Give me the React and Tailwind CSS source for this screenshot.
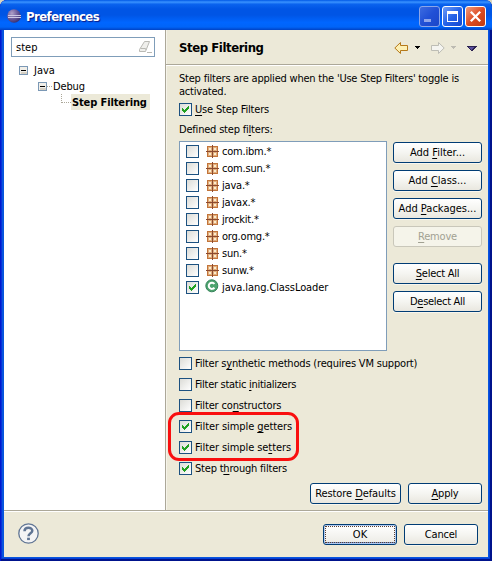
import React from "react";

function Check({ on }) {
  return (
    <span className="block h-[13px] w-[13px] shrink-0 border border-[#1c5180] bg-linear-to-br from-[#dcdcd7] to-white">
      {on && (
        <svg width="11" height="11" viewBox="0 0 11 11" shapeRendering="crispEdges" className="block">
          <path d="M2 4h1v1h1v1h1v-1h1v-1h1v-1h1v-1h1v3h-1v1h-1v1h-1v1h-1v1h-1v-1h-1v-1h-1z" fill="#21a121" />
        </svg>
      )}
    </span>
  );
}

function Label({ text, k, className = "" }) {
  const i = k ?? -1;
  return (
    <span className={"whitespace-pre " + className}>
      {i < 0 ? text : (
        <>
          {text.slice(0, i)}
          <span className="underline decoration-1 underline-offset-[1.5px] [text-decoration-skip-ink:none]">{text[i]}</span>
          {text.slice(i + 1)}
        </>
      )}
    </span>
  );
}

function Button({ text, k, className, disabled, focus }) {
  return (
    <button
      className={
        "flex h-[21px] shrink-0 items-center justify-center rounded-[3px] border p-0 " +
        (disabled
          ? "border-[#c9c7ba] bg-[#f5f4ea] text-[#a1a192] "
          : focus
          ? "border-[#003c74] bg-linear-to-b from-white to-[#ecebe5] shadow-[inset_0_0_0_1px_#b2caf0,inset_0_-2px_0_#6f92d4] "
          : "border-[#003c74] bg-linear-to-b from-white via-[#f5f5f1] to-[#e9e7df] shadow-[0_1px_0_#f8f6ee] ") +
        className
      }
    >
      {focus ? (
        <span className="flex h-[17px] w-[70px] items-center justify-center border border-dotted border-[#5c4030]">
          <Label text={text} k={k} />
        </span>
      ) : (
        <Label text={text} k={k} />
      )}
    </button>
  );
}

function PackageIcon() {
  return (
    <svg width="13" height="13" viewBox="0 0 13 13" shapeRendering="crispEdges" className="block shrink-0">
      <rect x="1" y="1" width="11" height="11" fill="#c2743a" />
      <rect x="2" y="2" width="9" height="9" fill="#e2ae7c" />
      <path d="M3 3h2v2h-2zM8 3h2v2h-2zM3 8h2v2h-2zM8 8h2v2h-2z" fill="#fbeccf" />
      <path d="M6 0h1v13h-1zM0 6h13v1h-13z" fill="#8a4a30" />
    </svg>
  );
}

function ClassIcon() {
  return (
    <svg width="14" height="14" viewBox="0 0 14 14" className="-mt-[4px] block shrink-0">
      <circle cx="6.8" cy="6.8" r="6" fill="#4da36e" stroke="#35835a" />
      <path d="M9.4 5A3.1 3.1 0 1 0 9.4 8.6" fill="none" stroke="#fff" strokeWidth="2" />
    </svg>
  );
}

function Expander() {
  return (
    <svg width="9" height="9" viewBox="0 0 9 9" shapeRendering="crispEdges" className="block shrink-0">
      <rect x=".5" y=".5" width="8" height="8" fill="#f1efe9" stroke="#7b98b5" />
      <path d="M2 6h6v2h-6z" fill="#d6d0c4" />
      <path d="M2 4h5v1h-5z" fill="#000" />
    </svg>
  );
}

function WinButton({ kind }) {
  const tone =
    kind === "close"
      ? "border-white bg-linear-to-br from-[#f09a7c] via-[#dd4c22] to-[#c03a10]"
      : kind === "max"
      ? "border-white bg-linear-to-br from-[#6f9cf7] via-[#2563e8] to-[#1547d0]"
      : "border-[#8ba5e9] bg-linear-to-br from-[#3d6be0] via-[#2150d6] to-[#1c46c8]";
  return (
    <span className={"block h-[21px] w-[21px] rounded-[3px] border " + tone}>
      <svg width="19" height="19" viewBox="0 0 19 19" className="block">
        {kind === "min" && <path d="M4 12h7v3h-7z" fill="#8fa5ea" />}
        {kind === "max" && <path d="M4 4h11v11h-11zM5 7v7h9v-7z" fill="#fff" fillRule="evenodd" />}
        {kind === "close" && <path d="M4.800 4.800l9.400 9.400M14.200 4.800l-9.400 9.400" stroke="#fff" strokeWidth="2.300" />}
      </svg>
    </span>
  );
}

function EclipseIcon() {
  return (
    <svg width="16" height="16" viewBox="0 0 16 16" className="block">
      <defs>
        <radialGradient id="orb" cx=".35" cy=".3" r=".8">
          <stop offset="0" stopColor="#b0a0c8" />
          <stop offset=".5" stopColor="#6c5c9c" />
          <stop offset="1" stopColor="#302868" />
        </radialGradient>
      </defs>
      <circle cx="7" cy="8" r="6.800" fill="url(#orb)" />
      <path d="M1 7h13v1h-13zM1 9h13v1h-13z" fill="#cdc8e4" shapeRendering="crispEdges" />
    </svg>
  );
}

function NavIcons() {
  return (
    <svg width="84" height="14" viewBox="0 0 84 14" className="mt-[2px] block">
      <path d="M.8 7L6.500 1.500V4.500H13.500V9.500H6.500V12.500Z" fill="#fdf0b4" stroke="#b5791a" />
      <path d="M21 5h5v1h-1v1h-1v1h-1v-1h-1v-1h-1z" fill="#000" shapeRendering="crispEdges" />
      <path d="M50.200 7L44.500 1.500V4.500H37.500V9.500H44.500V12.500Z" fill="#f4f4f0" stroke="#bdbdb5" />
      <path d="M57 5h5v1h-1v1h-1v1h-1v-1h-1v-1h-1z" fill="#bdbbb2" shapeRendering="crispEdges" />
      <path d="M73 5h10v1h-1v1h-1v1h-1v1h-1v1h-2v-1h-1v-1h-1v-1h-1v-1h-1z" fill="#2b2250" shapeRendering="crispEdges" />
      <path d="M75 6h5v1h-1v1h-1v1h-1v-1h-1v-1h-1z" fill="#5a50a0" shapeRendering="crispEdges" />
    </svg>
  );
}

const filters = ["com.ibm.*", "com.sun.*", "java.*", "javax.*", "jrockit.*", "org.omg.*", "sun.*", "sunw.*"];

const options = [
  ["Filter synthetic methods (requires VM support)", 8, false, "tracking-[-0.18px]"],
  ["Filter static initializers", 14, false, "tracking-[-0.28px]"],
  ["Filter constructors", 9, false, "tracking-[-0.16px]"],
  ["Filter simple getters", 14, true, "tracking-[-0.08px]"],
  ["Filter simple setters", 16, true, "tracking-[-0.08px]"],
  ["Step through filters", 6, true, "tracking-[-0.2px]"],
];

export default function App() {
  return (
    <div className="h-[561px] w-[492px] overflow-hidden bg-[#d8d5c0] font-['DejaVu_Sans_Condensed','DejaVu_Sans',sans-serif] text-[11px] leading-[13px] text-black [font-stretch:condensed]">
      <div className="flex h-full flex-col overflow-hidden rounded-t-[7px] bg-[#0855dd] shadow-[inset_1px_0_0_#0019cf,inset_-2px_-2px_0_#00138c,inset_2px_0_0_#0831d9,inset_-3px_-3px_0_#0441d8]">
        <header className="flex h-[30px] shrink-0 items-center bg-[linear-gradient(to_bottom,#0058e6_0%,#3a93ff_7%,#0a63ee_14%,#0055e5_30%,#0055e5_50%,#0066ff_75%,#0064f8_90%,#0042c4_100%)] pl-[7px] pr-[6px] pt-[2px]">
          <EclipseIcon />
          <span className="ml-[3px] whitespace-nowrap text-[13px] font-bold tracking-[-0.55px] text-white [text-shadow:1px_1px_1px_#0a1883]">Preferences</span>
          <div className="ml-auto flex gap-[2px]">
            <WinButton kind="min" />
            <WinButton kind="max" />
            <WinButton kind="close" />
          </div>
        </header>

        <div className="mx-[4px] mb-[4px] flex min-h-0 flex-1 flex-col bg-[#ece9d8]">
          <div className="flex h-[480px] shrink-0">
            <aside className="w-[161px] shrink-0 bg-white pl-[7px] pt-[7px]">
              <div className="flex h-[20px] w-[144px] items-center justify-between border border-[#7f9db9] pl-[4px] pr-[1px]">
                <span>step</span>
                <svg width="15" height="14" viewBox="0 0 15 14" className="block">
                  <path d="M6.500 1.500H11.500L7.500 11.500H1.500V9.500Z" fill="#efefec" stroke="#b9b9b4" />
                  <path d="M2.500 8.500H7.500L8 10M9 12.500H14" fill="none" stroke="#b9b9b4" />
                </svg>
              </div>
              <div className="mt-[5px] flex h-4 items-center pl-[8px]">
                <Expander />
                <span className="ml-[6px]">Java</span>
              </div>
              <div className="flex h-4 items-center pl-[27px]">
                <Expander />
                <span className="h-px w-[5px] border-t border-dotted border-[#aca899]" />
                <span className="ml-px tracking-[-0.15px]">Debug</span>
              </div>
              <div className="flex h-4 items-center pl-[50px]">
                <span className="mb-[7px] h-[9px] w-[10px] border-b border-l border-dotted border-[#aca899]" />
                <span className="flex h-4 w-[79px] items-center whitespace-nowrap bg-[#ece9d8] pl-px font-bold tracking-[-0.12px]">Step Filtering</span>
              </div>
            </aside>

            <main className="flex min-w-0 flex-1 flex-col border-l border-[#aca899] shadow-[inset_1px_0_0_#f6f4ea]">
              <div className="flex h-[35px] shrink-0 items-center justify-between border-b border-[#aca899] pl-[13px] pr-[10px] shadow-[0_1px_0_#fff]">
                <span className="mt-px whitespace-nowrap text-[13px] font-bold tracking-[-0.42px]">Step Filtering</span>
                <NavIcons />
              </div>
              <div className="relative flex flex-col pl-[13px] pr-[6px] pt-[7px]">
                <p className="whitespace-nowrap tracking-[-0.21px]">Step filters are applied when the 'Use Step Filters' toggle is<br />activated.</p>
                <div className="mt-[5px] flex h-[13px] items-center gap-[3px]">
                  <Check on />
                  <Label text="Use Step Filters" k={0} className="tracking-[-0.18px]" />
                </div>
                <div className="mt-[7px] flex h-[13px] items-center"><Label text="Defined step filters:" k={15} className="tracking-[-0.2px]" /></div>
                <div className="mt-[5px] flex justify-between">
                  <div className="flex h-[210px] w-[208px] flex-col border border-[#7f9db9] bg-white pl-[6px] pt-[1px]">
                    {filters.map((name) => (
                      <div key={name} className="flex h-[17px] shrink-0 items-center">
                        <Check />
                        <span className="ml-[7px]"><PackageIcon /></span>
                        <span className="ml-[3px] tracking-[-0.2px]">{name}</span>
                      </div>
                    ))}
                    <div className="flex h-[17px] shrink-0 items-center">
                      <Check on />
                      <span className="ml-[6px]"><ClassIcon /></span>
                      <span className="ml-[3px] tracking-[-0.1px]">java.lang.ClassLoader</span>
                    </div>
                  </div>
                  <div className="flex w-[89px] flex-col gap-[7px] pt-px">
                    <Button text="Add Filter..." k={4} className="w-full" />
                    <Button text="Add Class..." k={4} className="w-full" />
                    <Button text="Add Packages..." k={4} className="w-full" />
                    <Button text="Remove" k={0} disabled className="w-full tracking-[-0.2px]" />
                    <Button text="Select All" k={0} className="mt-[9px] w-full tracking-[-0.25px]" />
                    <Button text="Deselect All" k={1} className="w-full tracking-[-0.3px]" />
                  </div>
                </div>
                <div className="mt-[6px] flex flex-col gap-2">
                  {options.map(([text, k, on, track]) => (
                    <div key={text} className="flex h-[13px] items-center gap-[3px]">
                      <Check on={on} />
                      <Label text={text} k={k} className={track} />
                    </div>
                  ))}
                </div>
                <div className="mt-[8px] flex justify-end gap-[7px]">
                  <Button text="Restore Defaults" k={8} className="w-[91px] tracking-[-0.08px]" />
                  <Button text="Apply" k={0} className="w-[74px] tracking-[-0.2px]" />
                </div>
                <div className="pointer-events-none absolute left-[2px] top-[347px] h-[49px] w-[131px] rounded-[11px] border-[3px] border-[#f90f0f]" />
              </div>
            </main>
          </div>

          <footer className="flex flex-1 items-center justify-between border-t border-[#aca899] pl-[14px] pr-[10px] shadow-[inset_0_1px_0_#fff]">
            <svg width="21" height="21" viewBox="0 0 21 21" className="-mt-[2px] block">
              <circle cx="10.500" cy="10.500" r="9.700" fill="#f4f4f5" stroke="#607594" strokeWidth="1.300" />
              <path d="M6.500 8.200C6.500 3.600 14.300 3.800 14.300 7.700C14.300 10.300 10.500 10.300 10.500 13.300" fill="none" stroke="#607594" strokeWidth="2.500" />
              <path d="M9.100 14.700h2.800v2.400h-2.800z" fill="#607594" />
            </svg>
            <div className="flex gap-[7px]">
              <Button text="OK" focus className="w-[74px]" />
              <Button text="Cancel" className="w-[74px] tracking-[-0.2px]" />
            </div>
          </footer>
        </div>
      </div>
    </div>
  );
}
